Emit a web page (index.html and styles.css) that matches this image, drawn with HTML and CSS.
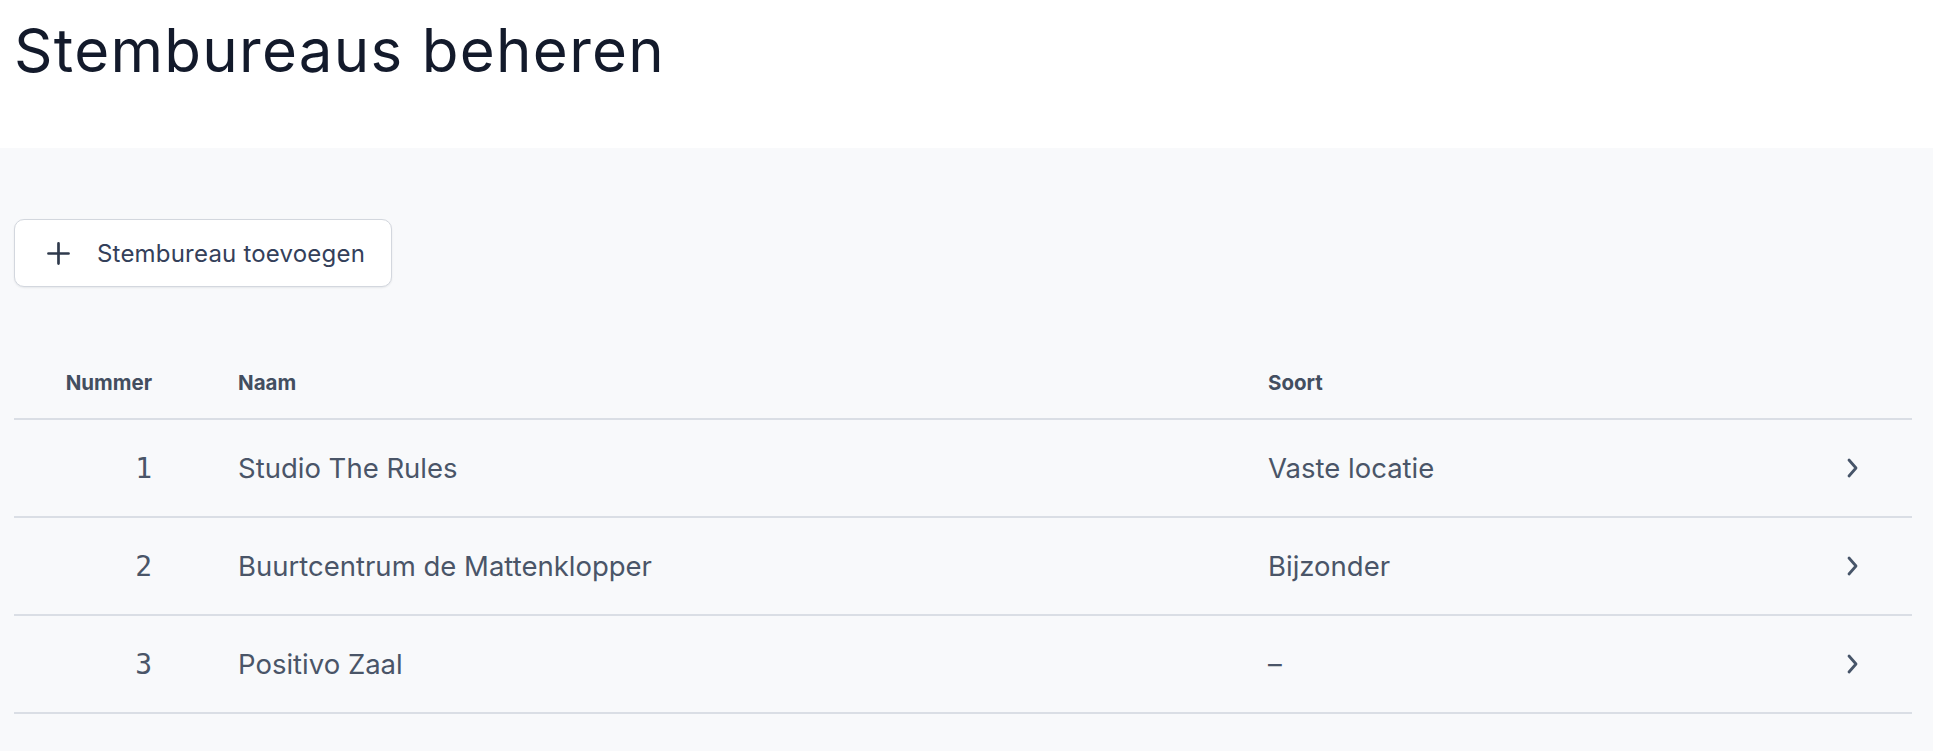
FILE: index.html
```html
<!DOCTYPE html>
<html lang="nl">
<head>
<meta charset="utf-8">
<title>Stembureaus beheren</title>
<link rel="stylesheet" href="styles.css">
</head>
<body>
<header class="page-header">
  <h1 class="page-title">Stembureaus beheren</h1>
</header>
<main class="content">
  <button class="btn" type="button">
    <svg class="btn-icon" viewBox="0 0 24 24" width="23" height="23" aria-hidden="true">
      <path d="M12 1.5v21M1.5 12h21" fill="none" stroke="currentColor" stroke-width="2.8" stroke-linecap="round"/>
    </svg>
    <span>Stembureau toevoegen</span>
  </button>

  <div class="table" role="table">
    <div class="row head" role="row">
      <div class="cell num" role="columnheader">Nummer</div>
      <div class="cell" role="columnheader">Naam</div>
      <div class="cell" role="columnheader">Soort</div>
      <div class="cell"></div>
    </div>
    <div class="row" role="row">
      <div class="cell num mono">1</div>
      <div class="cell">Studio The Rules</div>
      <div class="cell">Vaste locatie</div>
      <div class="cell chev"><svg viewBox="0 0 11 20" width="11" height="20"><path d="M2 2l7 8-7 8" fill="none" stroke="currentColor" stroke-width="2.8" stroke-linecap="round" stroke-linejoin="round"/></svg></div>
    </div>
    <div class="row" role="row">
      <div class="cell num mono">2</div>
      <div class="cell">Buurtcentrum de Mattenklopper</div>
      <div class="cell">Bijzonder</div>
      <div class="cell chev"><svg viewBox="0 0 11 20" width="11" height="20"><path d="M2 2l7 8-7 8" fill="none" stroke="currentColor" stroke-width="2.8" stroke-linecap="round" stroke-linejoin="round"/></svg></div>
    </div>
    <div class="row" role="row">
      <div class="cell num mono">3</div>
      <div class="cell">Positivo Zaal</div>
      <div class="cell">–</div>
      <div class="cell chev"><svg viewBox="0 0 11 20" width="11" height="20"><path d="M2 2l7 8-7 8" fill="none" stroke="currentColor" stroke-width="2.8" stroke-linecap="round" stroke-linejoin="round"/></svg></div>
    </div>
  </div>
</main>
</body>
</html>
```

FILE: styles.css
```css
html, body {
  margin: 0;
  padding: 0;
}

body {
  font-family: Inter, "Noto Sans", "Liberation Sans", sans-serif;
  background: #f8f9fb;
  color: #475569;
  min-height: 751px;
}

.page-header {
  background: #ffffff;
  height: 148px;
  padding: 20px 14px 0;
  box-sizing: border-box;
}

.page-title {
  margin: 0;
  font-size: 60px;
  line-height: 60px;
  font-weight: 400;
  letter-spacing: 1.3px;
  color: #131a2b;
}

.content {
  background: #f8f9fb;
  padding: 71px 21px 40px 14px;
}

.btn {
  display: inline-flex;
  align-items: center;
  gap: 27px;
  height: 68px;
  padding: 0 26px 0 32px;
  background: #ffffff;
  border: 1px solid #d3d7de;
  border-radius: 10px;
  box-shadow: 0 1px 2px rgba(16, 24, 40, 0.08);
  font-family: inherit;
  font-size: 24px;
  font-weight: 400;
  letter-spacing: 0.2px;
  color: #34405a;
  cursor: pointer;
}

.btn-icon {
  color: #2f3a4c;
  flex: none;
}

.table {
  margin-top: 59px;
}

.row {
  display: grid;
  grid-template-columns: 138px minmax(0, 1fr) 493px 11px;
  column-gap: 86px;
  padding-right: 54px;
  align-items: center;
  height: 98px;
  border-bottom: 2px solid #dadee5;
  box-sizing: border-box;
  font-size: 27.5px;
  color: #4a5568;
}

.row.head {
  height: 74px;
  padding-top: 1px;
  font-size: 20.5px;
  font-weight: 700;
  color: #434e60;
}

.cell {
  white-space: nowrap;
}

.num {
  text-align: right;
}

.mono {
  font-family: "DejaVu Sans Mono", "Liberation Mono", monospace;
  font-size: 28px;
}

.chev {
  display: flex;
  align-items: center;
  color: #475569;
}
```
